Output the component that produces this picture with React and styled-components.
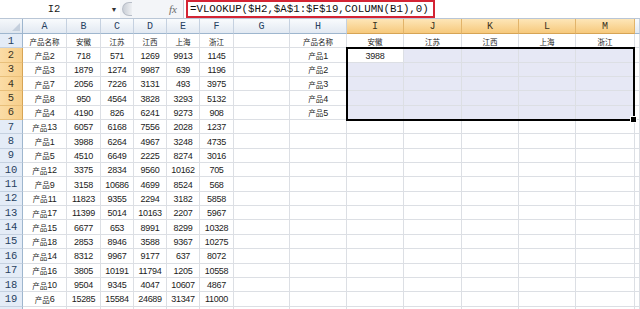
import React from "react";
import styled, { createGlobalStyle } from "styled-components";

const GlobalStyle = createGlobalStyle`
	html, body {
		margin: 0;
		padding: 0;
		background: #ffffff;
		overflow: hidden;
	}
`;

const COLS = [23, 44, 34, 33, 33, 33, 34, 56, 57, 57, 58, 57, 57, 59];
const LETTERS = ["A", "B", "C", "D", "E", "F", "G", "H", "I", "J", "K", "L", "M", ""];
const ROW_H = 14.35;
const HEAD_H = 15;

const DATA = [
	["产品名称", "安徽", "江苏", "江西", "上海", "浙江"],
	["产品2", 718, 571, 1269, 9913, 1145],
	["产品3", 1879, 1274, 9987, 639, 1196],
	["产品7", 2056, 7226, 3131, 493, 3975],
	["产品8", 950, 4564, 3828, 3293, 5132],
	["产品4", 4190, 826, 6241, 9273, 908],
	["产品13", 6057, 6168, 7556, 2028, 1237],
	["产品1", 3988, 6264, 4967, 3248, 4735],
	["产品5", 4510, 6649, 2225, 8274, 3016],
	["产品12", 3375, 2834, 9560, 10162, 705],
	["产品9", 3158, 10686, 4699, 8524, 568],
	["产品11", 11823, 9355, 2294, 3182, 5858],
	["产品17", 11399, 5014, 10163, 2207, 5967],
	["产品15", 6677, 653, 8991, 8299, 10328],
	["产品18", 2853, 8946, 3588, 9367, 10275],
	["产品14", 8312, 9967, 9177, 637, 8072],
	["产品16", 3805, 10191, 11794, 1205, 10558],
	["产品10", 9504, 9345, 4047, 10607, 4867],
	["产品6", 15285, 15584, 24689, 31347, 11000],
];

// lookup table on the right (H..M)
const LOOKUP = [
	["产品名称", "安徽", "江苏", "江西", "上海", "浙江"],
	["产品1", 3988, "", "", "", ""],
	["产品2", "", "", "", "", ""],
	["产品3", "", "", "", "", ""],
	["产品4", "", "", "", "", ""],
	["产品5", "", "", "", "", ""],
];

const Page = styled.div`
	width: 640px;
	height: 309px;
	overflow: hidden;
	display: flex;
	flex-direction: column;
	font-family: "Liberation Sans", "Noto Sans CJK SC", sans-serif;
`;

const FormulaBar = styled.div`
	height: 19px;
	box-sizing: border-box;
	display: flex;
	align-items: stretch;
	background: #f3f5f8;
	border-bottom: 1px solid #b9c6d6;
`;

const NameBox = styled.div`
	width: 108px;
	display: flex;
	align-items: center;
	justify-content: center;
	background: #ffffff;
	font-family: "Liberation Mono", monospace;
	font-size: 10.5px;
	color: #1a1a1a;
`;

const DropButton = styled.div`
	width: 12px;
	display: flex;
	align-items: center;
	justify-content: center;
	background: #ffffff;
	font-size: 7px;
	color: #333;
`;

const Splitter = styled.div`
	width: 9px;
	margin: 2px 0 2px 2px;
	border-radius: 9px 0 0 9px;
	background: linear-gradient(90deg, #c9ced6, #eef0f3);
	border: 1px solid #b8bec8;
	border-right: none;
`;

const FxBox = styled.div`
	flex: 0 0 52px;
	display: flex;
	align-items: center;
	justify-content: flex-end;
	padding-right: 6px;
	box-sizing: border-box;
	font-family: "Liberation Serif", serif;
	font-style: italic;
	font-size: 11px;
	color: #6b6b6b;
	border-right: 1px solid #c3ccd8;
`;

const FormulaInput = styled.div`
	flex: 1;
	display: flex;
	align-items: stretch;
	background: #ffffff;
	padding-left: 2px;
`;

const Highlight = styled.div`
	width: 249px;
	box-sizing: border-box;
	border: 2px solid #d42434;
	display: flex;
	align-items: center;
	padding-left: 2px;
	font-family: "Liberation Mono", monospace;
	font-size: 10.75px;
	color: #111;
	white-space: nowrap;
`;

const Sheet = styled.div`
	position: relative;
	flex: 1;
	display: grid;
	grid-template-columns: ${COLS.map((w) => w + "px").join(" ")} 1fr;
	grid-template-rows: ${HEAD_H}px repeat(20, ${ROW_H}px);
	overflow: hidden;
`;

const Corner = styled.div`
	box-sizing: border-box;
	background: linear-gradient(#f5f8fb, #dfe6ef);
	border-right: 1px solid #9eb6ce;
	border-bottom: 1px solid #9eb6ce;
	position: relative;
	&::after {
		content: "";
		position: absolute;
		right: 2px;
		bottom: 2px;
		border-left: 8px solid transparent;
		border-bottom: 8px solid #c4cfdd;
	}
`;

const ColHead = styled.div`
	box-sizing: border-box;
	display: flex;
	align-items: center;
	justify-content: center;
	font-family: "Liberation Mono", monospace;
	font-size: 10px;
	color: ${(p) => (p.$active ? "#3a3222" : "#27415f")};
	background: ${(p) =>
		p.$active ? "linear-gradient(#fde6b8, #f6c97c)" : "linear-gradient(#f9fbfd, #e2e9f2)"};
	border-right: 1px solid ${(p) => (p.$active ? "#e2b46a" : "#c5d1e0")};
	border-bottom: 1px solid ${(p) => (p.$active ? "#d6a455" : "#9eb6ce")};
`;

const RowHead = styled.div`
	box-sizing: border-box;
	display: flex;
	align-items: center;
	justify-content: center;
	font-family: "Liberation Mono", monospace;
	font-size: 10.5px;
	color: ${(p) => (p.$active ? "#3a3222" : "#27415f")};
	background: ${(p) => (p.$active ? "linear-gradient(90deg, #fbdca6, #f7cf8a)" : "#e4ecf7")};
	border-right: 1px solid ${(p) => (p.$active ? "#d6a455" : "#9eb6ce")};
	border-bottom: 1px solid ${(p) => (p.$active ? "#e8bf7a" : "#c5d1e0")};
`;

const Cell = styled.div`
	box-sizing: border-box;
	display: flex;
	align-items: center;
	justify-content: center;
	padding-top: 1px;
	font-size: 9px;
	letter-spacing: -0.3px;
	color: #1c1c1c;
	white-space: nowrap;
	overflow: hidden;
	background: ${(p) => (p.$sel ? "#e6e8f5" : "#ffffff")};
	border-right: 1px solid #dcdfe4;
	border-bottom: 1px solid #dcdfe4;
`;

const Han = styled.span`
	font-family: "Noto Sans CJK SC", sans-serif;
	font-size: 7.5px;
	letter-spacing: 0;
`;

const Selection = styled.div`
	position: absolute;
	left: 346px;
	top: ${HEAD_H + ROW_H - 1.5}px;
	width: 289px;
	height: ${ROW_H * 5 + 2}px;
	box-sizing: border-box;
	border: 2px solid #000;
	pointer-events: none;
	&::after {
		content: "";
		position: absolute;
		right: -4px;
		bottom: -4px;
		width: 5px;
		height: 5px;
		background: #000;
		border: 1px solid #fff;
	}
`;

function Text({ value }) {
	const parts = String(value).split(/([\u4e00-\u9fff]+)/).filter(Boolean);
	return parts.map((p, i) => (/[\u4e00-\u9fff]/.test(p) ? <Han key={i}>{p}</Han> : p));
}

function cellValue(r, c) {
	// r: 0-based row index (row 1 = 0), c: 0-based column (A = 0)
	if (c <= 5) return DATA[r] ? DATA[r][c] : "";
	if (c >= 7 && c <= 12 && r < LOOKUP.length) return LOOKUP[r][c - 7];
	return "";
}

export default function App() {
	const cells = [<Corner key="corner" />];
	for (let c = 0; c < 14; c++) {
		cells.push(
			<ColHead key={"h" + c} $active={c >= 8 && c <= 12}>
				{LETTERS[c]}
			</ColHead>
		);
	}
	for (let r = 0; r < 20; r++) {
		// row 20 is only a sliver at the bottom edge, its number is not visible
		cells.push(
			<RowHead key={"r" + r} $active={r >= 1 && r <= 5}>
				{r < 19 ? r + 1 : ""}
			</RowHead>
		);
		for (let c = 0; c < 14; c++) {
			const sel = r >= 1 && r <= 5 && c >= 8 && c <= 12 && !(r === 1 && c === 8);
			cells.push(
				<Cell key={r + "-" + c} $sel={sel}>
					<Text value={cellValue(r, c)} />
				</Cell>
			);
		}
	}

	return (
		<>
			<GlobalStyle />
			<Page>
				<FormulaBar>
					<NameBox>I2</NameBox>
					<DropButton>▼</DropButton>
					<Splitter />
					<FxBox>fx</FxBox>
					<FormulaInput>
						<Highlight>=VLOOKUP($H2,$A$1:$F$19,COLUMN(B1),0)</Highlight>
					</FormulaInput>
				</FormulaBar>
				<Sheet>
					{cells}
					<Selection />
				</Sheet>
			</Page>
		</>
	);
}
